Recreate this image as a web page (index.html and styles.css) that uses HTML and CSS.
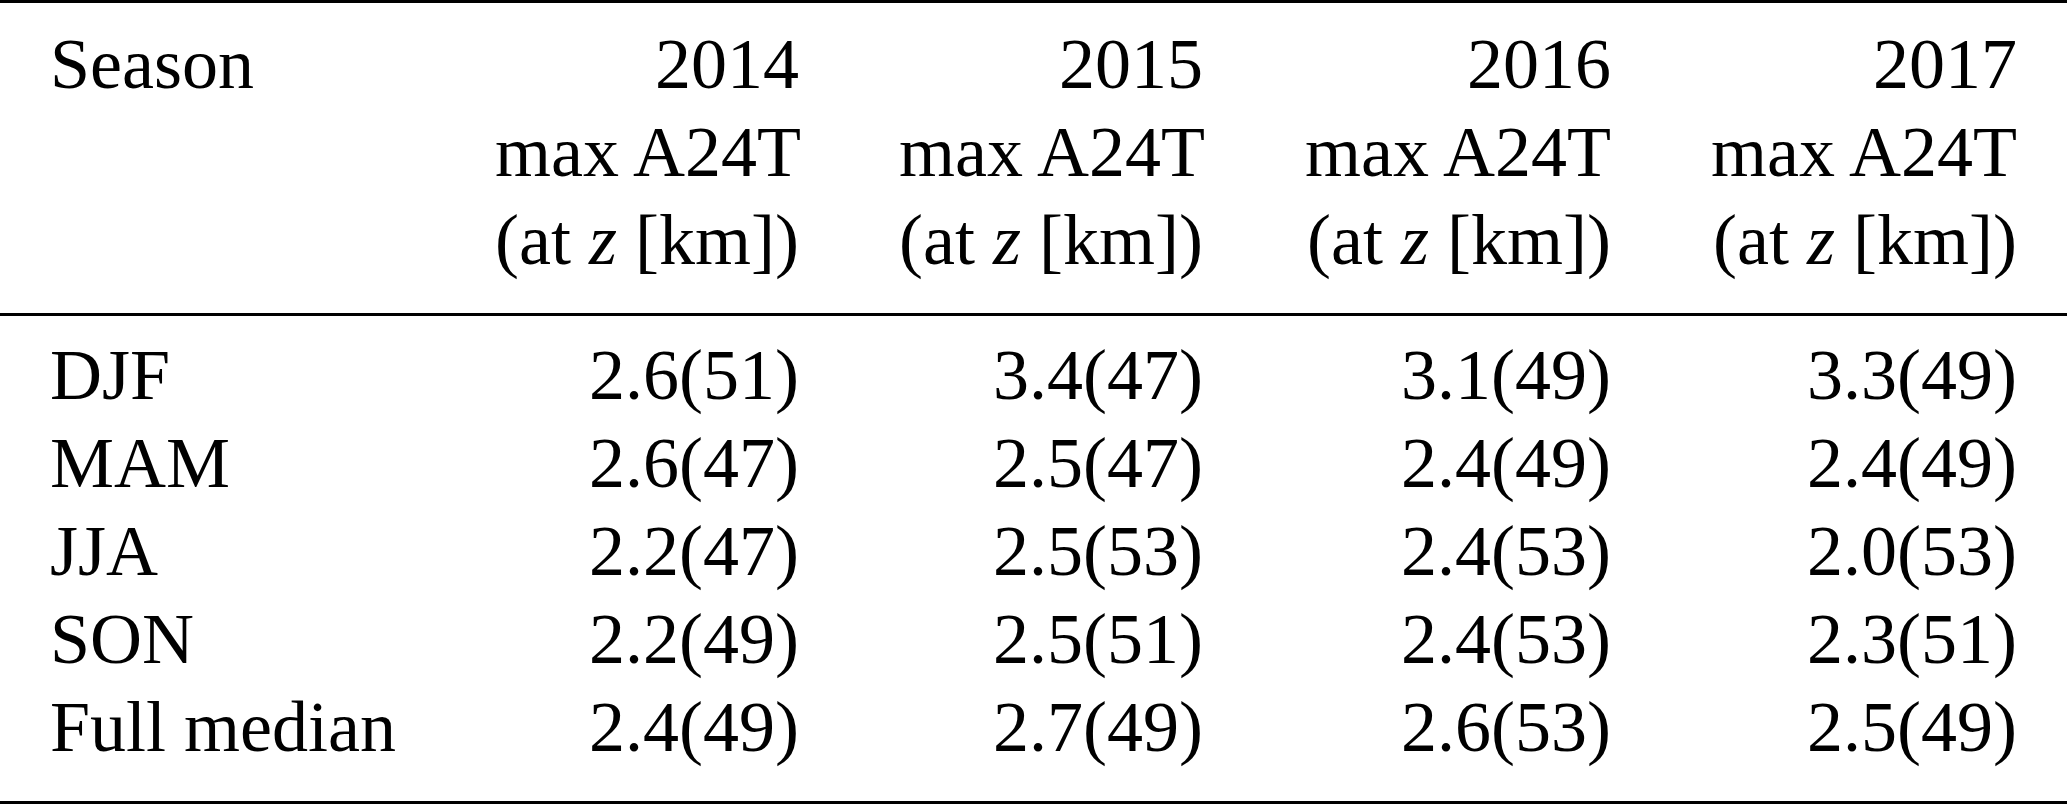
FILE: index.html
```html
<!DOCTYPE html>
<html lang="en">

<head>
    <meta charset="UTF-8">
    <meta name="viewport" content="width=device-width, initial-scale=1.0">
    <title>Seasonal maximum A24T</title>
    <link rel="stylesheet" href="styles.css">
</head>

<body>
    <table class="results">
        <colgroup>
            <col class="col-season">
            <col class="col-year">
            <col class="col-year">
            <col class="col-year-wide">
            <col class="col-year-last">
        </colgroup>
        <thead>
            <tr>
                <th class="label">Season</th>
                <th>2014<br>max A24T<br>(at <i>z</i> [km])</th>
                <th>2015<br>max A24T<br>(at <i>z</i> [km])</th>
                <th>2016<br>max A24T<br>(at <i>z</i> [km])</th>
                <th>2017<br>max A24T<br>(at <i>z</i> [km])</th>
            </tr>
        </thead>
        <tbody>
            <tr>
                <td class="label">DJF</td>
                <td>2.6(51)</td>
                <td>3.4(47)</td>
                <td>3.1(49)</td>
                <td>3.3(49)</td>
            </tr>
            <tr>
                <td class="label">MAM</td>
                <td>2.6(47)</td>
                <td>2.5(47)</td>
                <td>2.4(49)</td>
                <td>2.4(49)</td>
            </tr>
            <tr>
                <td class="label">JJA</td>
                <td>2.2(47)</td>
                <td>2.5(53)</td>
                <td>2.4(53)</td>
                <td>2.0(53)</td>
            </tr>
            <tr>
                <td class="label">SON</td>
                <td>2.2(49)</td>
                <td>2.5(51)</td>
                <td>2.4(53)</td>
                <td>2.3(51)</td>
            </tr>
            <tr>
                <td class="label">Full median</td>
                <td>2.4(49)</td>
                <td>2.7(49)</td>
                <td>2.6(53)</td>
                <td>2.5(49)</td>
            </tr>
        </tbody>
    </table>
</body>

</html>
```

FILE: styles.css
```css
* {
    margin: 0;
    padding: 0;
    box-sizing: border-box;
}

body {
    font-family: 'Liberation Serif', 'Times New Roman', serif;
    font-size: 72px;
    color: #000000;
    background-color: #ffffff;
}

.results {
    width: 2067px;
    table-layout: fixed;
    border-collapse: separate;
    border-spacing: 0;
}

.col-season {
    width: 445px;
}

.col-year {
    width: 404px;
}

.col-year-wide {
    width: 408px;
}

.col-year-last {
    width: 406px;
}

.results th,
.results td {
    padding: 0 50px;
    line-height: 88px;
    font-weight: normal;
    text-align: right;
    vertical-align: top;
    white-space: nowrap;
}

.results .label {
    text-align: left;
}

.results th {
    padding-top: 17px;
    padding-bottom: 29px;
    border-top: 3px solid #000000;
    border-bottom: 3px solid #000000;
}

.results tbody tr:first-child td {
    padding-top: 15px;
}

.results tbody tr:last-child td {
    padding-bottom: 30px;
    border-bottom: 3px solid #000000;
}
```
